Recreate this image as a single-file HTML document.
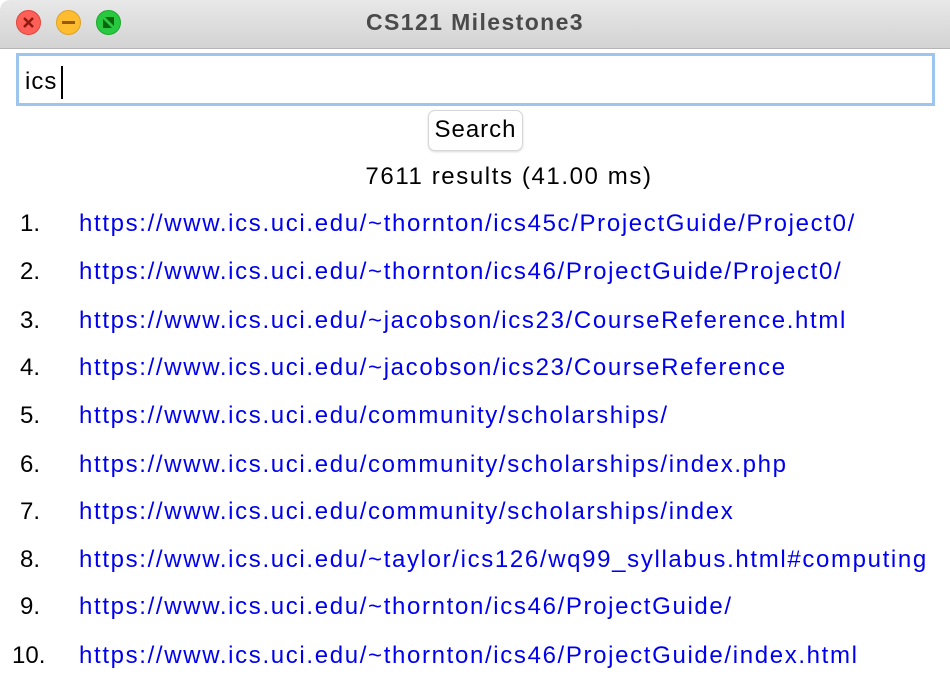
<!DOCTYPE html>
<html><head><style>
body{margin:0;width:950px;height:676px;overflow:hidden;background:#fff;font-family:"Liberation Sans",sans-serif;position:relative}
.tb{position:absolute;left:0;top:0;width:950px;height:48px;background:linear-gradient(#e8e8e8,#d3d3d3);border-bottom:1px solid #b5b5b5;border-top-left-radius:10px}
.dot{position:absolute;top:10px;width:23px;height:23px;border-radius:50%}
.title{position:absolute;top:9px;left:0;width:950px;text-align:center;font-weight:bold;font-size:23px;letter-spacing:1.4px;color:#4a4a4a}
.inp{position:absolute;left:16px;top:53px;width:913px;height:47px;border:3px solid #9cc5ef;background:#fff}
.inp span{position:absolute;left:6px;top:12px;font-size:24px;letter-spacing:1px;color:#000}
.caret{position:absolute;left:42px;top:10px;width:2px;height:33px;background:#000}
.btn{position:absolute;left:428px;top:110px;width:93px;height:39px;border:1px solid #d6d6d6;border-radius:7px;box-shadow:0 1px 2px rgba(0,0,0,.15);text-align:center;line-height:38px;font-size:24px;letter-spacing:1px}
.res{position:absolute;top:163px;left:0;width:1018px;text-align:center;font-size:24px;letter-spacing:1.6px}
.row{position:absolute;left:0;width:950px;font-size:24px;height:30px}
.n{position:absolute;left:20px;white-space:nowrap}
.l{position:absolute;left:79px;color:#0000ee;white-space:nowrap;letter-spacing:1.65px}
</style></head><body>
<div class="tb">
<div class="dot" style="left:16px;background:#fe5f57;border:1px solid #e0443e"><svg width="23" height="23"><path d="M7 7L16 16M16 7L7 16" stroke="#8c1a10" stroke-width="2.5"/></svg></div>
<div class="dot" style="left:56px;background:#febc2e;border:1px solid #dea123"><svg width="23" height="23"><path d="M5 11.5H18" stroke="#985712" stroke-width="3"/></svg></div>
<div class="dot" style="left:96px;background:#28c840;border:1px solid #1aab29"><svg width="23" height="23"><path d="M6 17V8L15 17Z M17 6V15L8 6Z" fill="#0b650d"/></svg></div>
<div class="title">CS121 Milestone3</div>
</div>
<div class="inp"><span>ics</span><div class="caret"></div></div>
<div class="btn">Search</div>
<div class="res">7611 results (41.00 ms)</div>
<div class="row" style="top:210px"><span class="n">1.</span><span class="l">https://www.ics.uci.edu/~thornton/ics45c/ProjectGuide/Project0/</span></div>
<div class="row" style="top:258px"><span class="n">2.</span><span class="l">https://www.ics.uci.edu/~thornton/ics46/ProjectGuide/Project0/</span></div>
<div class="row" style="top:307px"><span class="n">3.</span><span class="l">https://www.ics.uci.edu/~jacobson/ics23/CourseReference.html</span></div>
<div class="row" style="top:354px"><span class="n">4.</span><span class="l">https://www.ics.uci.edu/~jacobson/ics23/CourseReference</span></div>
<div class="row" style="top:402px"><span class="n">5.</span><span class="l">https://www.ics.uci.edu/community/scholarships/</span></div>
<div class="row" style="top:451px"><span class="n">6.</span><span class="l">https://www.ics.uci.edu/community/scholarships/index.php</span></div>
<div class="row" style="top:498px"><span class="n">7.</span><span class="l">https://www.ics.uci.edu/community/scholarships/index</span></div>
<div class="row" style="top:546px"><span class="n">8.</span><span class="l">https://www.ics.uci.edu/~taylor/ics126/wq99_syllabus.html#computing</span></div>
<div class="row" style="top:593px"><span class="n">9.</span><span class="l">https://www.ics.uci.edu/~thornton/ics46/ProjectGuide/</span></div>
<div class="row" style="top:642px"><span class="n" style="left:12px">10.</span><span class="l">https://www.ics.uci.edu/~thornton/ics46/ProjectGuide/index.html</span></div>
</body></html>
